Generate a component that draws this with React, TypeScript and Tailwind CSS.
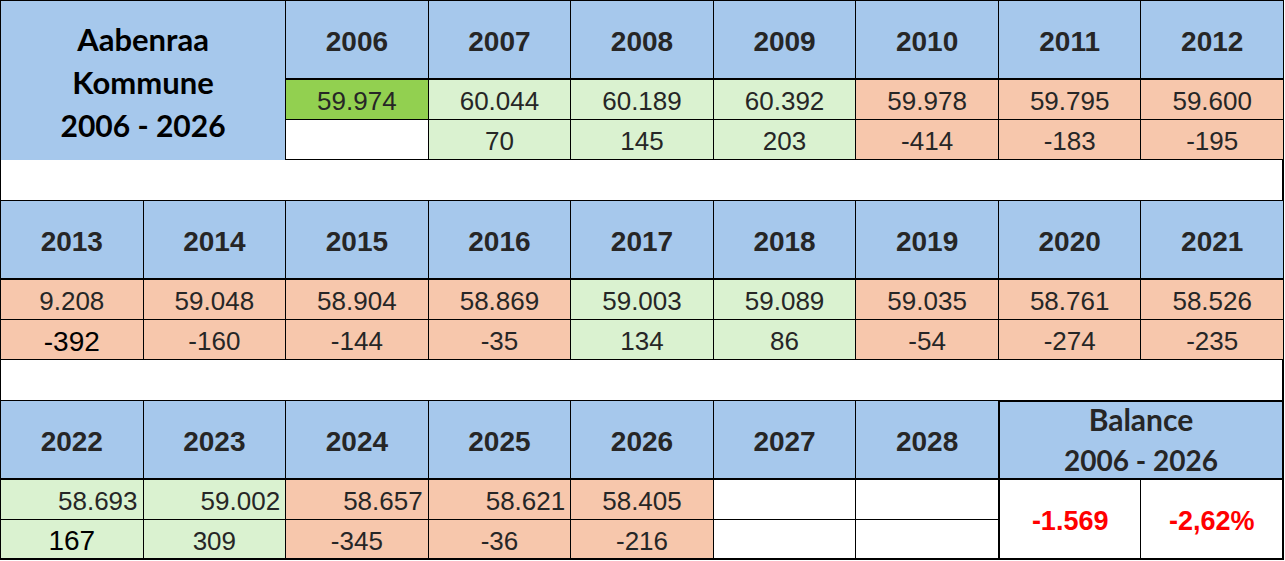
type Tone = "blue" | "green" | "lime" | "orange" | "white";

type DataCell = {
  value: string;
  tone: Tone;
  align?: "center" | "right";
  strong?: boolean;
};

const toneClass: Record<Tone, string> = {
  blue: "bg-[#a6c8ec]",
  green: "bg-[#daf2d0]",
  lime: "bg-[#92d050]",
  orange: "bg-[#f7c7ac]",
  white: "bg-white",
};

const yearFont = { fontFamily: '"Liberation Sans", Arial, sans-serif' };
const titleFont = { fontFamily: 'Lato, "Open Sans", sans-serif' };

function YearHead({ year }: { year: string }) {
  return (
    <div
      style={yearFont}
      className="flex items-center justify-center pt-1 bg-[#a6c8ec] border-r border-b-2 border-black text-[28px] font-bold text-[#262626]"
    >
      {year}
    </div>
  );
}

function Value({ cell, last }: { cell: DataCell; last?: boolean }) {
  const align =
    cell.align === "right" ? "justify-end pr-[5px]" : "justify-center";
  const text = cell.strong
    ? "text-[28px] leading-none text-black items-end pb-[3px]"
    : "text-[26px] text-[#262626] items-center pt-[4px]";
  return (
    <div
      style={yearFont}
      className={`flex ${align} ${text} ${toneClass[cell.tone]} border-r border-black ${
        last ? "border-b-2" : "border-b"
      }`}
    >
      {cell.value}
    </div>
  );
}

function Spacer() {
  return <div className="h-[40px] border-l border-r-2 border-black bg-white" />;
}

const row1Years = ["2006", "2007", "2008", "2009", "2010", "2011", "2012"];
const row1A: DataCell[] = [
  { value: "59.974", tone: "lime" },
  { value: "60.044", tone: "green" },
  { value: "60.189", tone: "green" },
  { value: "60.392", tone: "green" },
  { value: "59.978", tone: "orange" },
  { value: "59.795", tone: "orange" },
  { value: "59.600", tone: "orange" },
];
const row1B: DataCell[] = [
  { value: "", tone: "white" },
  { value: "70", tone: "green" },
  { value: "145", tone: "green" },
  { value: "203", tone: "green" },
  { value: "-414", tone: "orange" },
  { value: "-183", tone: "orange" },
  { value: "-195", tone: "orange" },
];

const row2Years = [
  "2013", "2014", "2015", "2016", "2017", "2018", "2019", "2020", "2021",
];
const row2A: DataCell[] = [
  { value: "9.208", tone: "orange" },
  { value: "59.048", tone: "orange" },
  { value: "58.904", tone: "orange" },
  { value: "58.869", tone: "orange" },
  { value: "59.003", tone: "green" },
  { value: "59.089", tone: "green" },
  { value: "59.035", tone: "orange" },
  { value: "58.761", tone: "orange" },
  { value: "58.526", tone: "orange" },
];
const row2B: DataCell[] = [
  { value: "-392", tone: "orange", strong: true },
  { value: "-160", tone: "orange" },
  { value: "-144", tone: "orange" },
  { value: "-35", tone: "orange" },
  { value: "134", tone: "green" },
  { value: "86", tone: "green" },
  { value: "-54", tone: "orange" },
  { value: "-274", tone: "orange" },
  { value: "-235", tone: "orange" },
];

const row3Years = ["2022", "2023", "2024", "2025", "2026", "2027", "2028"];
const row3A: DataCell[] = [
  { value: "58.693", tone: "green", align: "right" },
  { value: "59.002", tone: "green", align: "right" },
  { value: "58.657", tone: "orange", align: "right" },
  { value: "58.621", tone: "orange", align: "right" },
  { value: "58.405", tone: "orange" },
  { value: "", tone: "white" },
  { value: "", tone: "white" },
];
const row3B: DataCell[] = [
  { value: "167", tone: "green", strong: true },
  { value: "309", tone: "green" },
  { value: "-345", tone: "orange" },
  { value: "-36", tone: "orange" },
  { value: "-216", tone: "orange" },
  { value: "", tone: "white" },
  { value: "", tone: "white" },
];

export default function App() {
  return (
    <div className="w-[1285px] h-[561px] bg-white overflow-hidden">
      <div className="w-[1284px]">
        {/* 2006 - 2012 */}
        <div className="grid grid-cols-9 grid-rows-[79px_40px_40px] border-l border-t border-black">
          <div
            style={titleFont}
            className="col-span-2 row-span-3 flex flex-col items-center justify-center pt-1 bg-[#a6c8ec] border-r border-black text-[30px] leading-[43px] font-bold text-black"
          >
            <span className="text-[31px]">Aabenraa</span>
            <span className="text-[31px]">Kommune</span>
            <span>2006 - 2026</span>
          </div>
          {row1Years.map((y) => (
            <YearHead key={y} year={y} />
          ))}
          {row1A.map((c, i) => (
            <Value key={"a" + i} cell={c} />
          ))}
          {row1B.map((c, i) => (
            <Value key={"b" + i} cell={c} />
          ))}
        </div>

        <Spacer />

        {/* 2013 - 2021 */}
        <div className="grid grid-cols-9 grid-rows-[79px_40px_40px] border-l border-t border-black">
          {row2Years.map((y) => (
            <YearHead key={y} year={y} />
          ))}
          {row2A.map((c, i) => (
            <Value key={"a" + i} cell={c} />
          ))}
          {row2B.map((c, i) => (
            <Value key={"b" + i} cell={c} />
          ))}
        </div>

        <Spacer />

        {/* 2022 - 2028 + balance */}
        <div className="grid grid-cols-9 grid-rows-[79px_40px_40px] border-l border-t border-black">
          {row3Years.map((y) => (
            <YearHead key={y} year={y} />
          ))}
          <div
            style={titleFont}
            className="col-span-2 flex flex-col items-center justify-center bg-[#a6c8ec] border-t-2 border-l border-r-2 border-b-2 border-black -mt-px text-[28px] leading-[41px] font-bold text-[#262626]"
          >
            <span className="text-[30px]">Balance</span>
            <span>2006 - 2026</span>
          </div>
          {row3A.map((c, i) => (
            <Value key={"a" + i} cell={c} />
          ))}
          <div
            style={yearFont}
            className="row-span-2 flex items-center justify-center pt-1 bg-white border-l border-r border-b-2 border-black text-[27px] font-bold text-[#ff0000]"
          >
            -1.569
          </div>
          <div
            style={yearFont}
            className="row-span-2 flex items-center justify-center pt-1 bg-white border-r-2 border-b-2 border-black text-[27px] font-bold text-[#ff0000]"
          >
            -2,62%
          </div>
          {row3B.map((c, i) => (
            <Value key={"b" + i} cell={c} last />
          ))}
        </div>
      </div>
    </div>
  );
}
